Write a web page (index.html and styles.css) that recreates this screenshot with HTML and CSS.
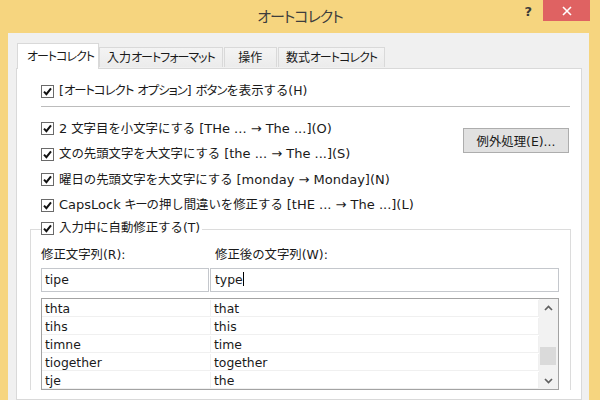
FILE: index.html
```html
<!DOCTYPE html>
<html lang="ja">
<head>
<meta charset="utf-8">
<title>オートコレクト</title>
<link rel="stylesheet" href="styles.css">
</head>
<body>
<div class="window">
  <div class="titlebar">
    <div class="tb-left"></div>
    <div class="title"><span class="kt">オートコレクト</span></div>
    <div class="tb-right">
      <span class="help">?</span>
      <span class="close"><svg width="10" height="10" viewBox="0 0 10 10"><path d="M1 1L9 9M9 1L1 9" stroke="#fff" stroke-width="1.6" fill="none"/></svg></span>
    </div>
  </div>
  <div class="client">
    <div class="tabs">
      <div class="tab active"><span class="kt">オートコレクト</span></div>
      <div class="tab">入力<span class="kt">オートフォーマット</span></div>
      <div class="tab tab-narrow">操作</div>
      <div class="tab">数式<span class="kt">オートコレクト</span></div>
    </div>
    <div class="page">
      <label class="check top-row"><span class="box"><svg width="13" height="13" viewBox="0 0 13 13"><path d="M3 6.6L5.4 9.2L10 3.4" stroke="#111" stroke-width="2" fill="none"/></svg></span><span>[<span class="kt">オートコレクト</span> <span class="kt">オプション</span>] <span class="kt">ボタン</span>を表示する(H)</span></label>
      <div class="sep"></div>
      <div class="opts">
        <div class="checks">
          <label class="check row"><span class="box"><svg width="13" height="13" viewBox="0 0 13 13"><path d="M3 6.6L5.4 9.2L10 3.4" stroke="#111" stroke-width="2" fill="none"/></svg></span><span><span class="lt">2</span> 文字目を小文字にする <span class="lt">[THe ... → The ...](O)</span></span></label>
          <label class="check row"><span class="box"><svg width="13" height="13" viewBox="0 0 13 13"><path d="M3 6.6L5.4 9.2L10 3.4" stroke="#111" stroke-width="2" fill="none"/></svg></span><span>文の先頭文字を大文字にする <span class="lt">[the ... → The ...](S)</span></span></label>
          <label class="check row"><span class="box"><svg width="13" height="13" viewBox="0 0 13 13"><path d="M3 6.6L5.4 9.2L10 3.4" stroke="#111" stroke-width="2" fill="none"/></svg></span><span>曜日の先頭文字を大文字にする <span class="lt">[monday → Monday](N)</span></span></label>
          <label class="check row"><span class="box"><svg width="13" height="13" viewBox="0 0 13 13"><path d="M3 6.6L5.4 9.2L10 3.4" stroke="#111" stroke-width="2" fill="none"/></svg></span><span><span class="lt">CapsLock</span> <span class="kt">キー</span>の押し間違いを修正する <span class="lt">[tHE ... → The ...](L)</span></span></label>
        </div>
        <button class="btn">例外処理(E)...</button>
      </div>
      <div class="group">
        <div class="group-head"><label class="check legend"><span class="box"><svg width="13" height="13" viewBox="0 0 13 13"><path d="M3 6.6L5.4 9.2L10 3.4" stroke="#111" stroke-width="2" fill="none"/></svg></span><span>入力中に自動修正する(T)</span></label></div>
        <div class="fields">
          <div class="lbl">修正文字列(R):</div>
          <div class="lbl lbl2">修正後の文字列(W):</div>
          <div class="input">tipe</div>
          <div class="input">type<span class="caret"></span></div>
        </div>
        <div class="list">
          <div class="rows">
            <div class="lrow"><span class="c1">thta</span><span class="c2">that</span></div>
            <div class="lrow"><span class="c1">tihs</span><span class="c2">this</span></div>
            <div class="lrow"><span class="c1">timne</span><span class="c2">time</span></div>
            <div class="lrow"><span class="c1">tiogether</span><span class="c2">together</span></div>
            <div class="lrow"><span class="c1">tje</span><span class="c2">the</span></div>
          </div>
          <div class="scrollbar">
            <span class="arrow"><svg width="9" height="6" viewBox="0 0 9 6"><path d="M1 5L4.5 1.5L8 5" stroke="#606060" stroke-width="1.7" fill="none"/></svg></span>
            <span class="track"><span class="thumb"></span></span>
            <span class="arrow"><svg width="9" height="6" viewBox="0 0 9 6"><path d="M1 1L4.5 4.5L8 1" stroke="#606060" stroke-width="1.7" fill="none"/></svg></span>
          </div>
        </div>
      </div>
    </div>
  </div>
</div>
</body>
</html>
```

FILE: styles.css
```css
* { box-sizing: border-box; }
html, body { margin: 0; padding: 0; }
body {
  width: 600px;
  height: 400px;
  overflow: hidden;
  background: #f6d57f;
  font-family: "DejaVu Sans", "Noto Sans CJK JP", sans-serif;
  font-size: 12.4px;
  color: #1a1a1a;
}
.kt { font-feature-settings: "palt"; letter-spacing: -1px; }
.lt { font-size: 13px; }
.window { width: 600px; height: 400px; display: flex; flex-direction: column; }

.titlebar {
  height: 33px;
  display: grid;
  grid-template-columns: 1fr auto 1fr;
  flex: none;
}
.title {
  font-family: "Noto Sans CJK JP", sans-serif;
  font-size: 15px;
  line-height: 20px;
  padding-top: 6px;
  color: #3d3d3d;
}
.tb-right { display: flex; justify-content: flex-end; align-items: flex-start; }
.help {
  font-family: "DejaVu Sans", sans-serif;
  font-weight: bold;
  font-size: 13px;
  line-height: 16px;
  color: #3a3a3a;
  margin-top: 4px;
  margin-right: 11px;
}
.close {
  width: 47px;
  height: 21px;
  background: #df6262;
  margin-right: 10px;
  display: flex;
  align-items: center;
  justify-content: center;
}

.client {
  flex: 1;
  margin: 0 11px 0 8px;
  background: #f0f0f0;
  padding: 10px 7px 0 8px;
  display: flex;
  flex-direction: column;
}
.tabs {
  display: flex;
  align-items: flex-end;
  padding-left: 1px;
  margin-bottom: -1px;
  position: relative;
  z-index: 1;
  flex: none;
  font-size: 12px;
}
.tab {
  height: 20px;
  padding: 2px 7px 0 7px;
  line-height: 16px;
  border: 1px solid #d9d9d9;
  border-bottom: none;
  background: linear-gradient(#f4f4f4, #ebebeb);
  margin-bottom: 2px;
  margin-left: 1px;
  white-space: nowrap;
}
.tab.active {
  height: 26px;
  padding: 5px 4px 0 9px;
  background: #fff;
  margin-bottom: 0;
  margin-left: 0;
}
.tab.active + .tab { margin-left: 0; }
.tab-narrow { min-width: 53px; text-align: center; }

.page {
  flex: 1;
  background: #fff;
  border: 1px solid #d9d9d9;
  padding: 14px 0 0 24px;
}

.check { display: flex; align-items: center; gap: 5px; white-space: nowrap; line-height: 16px; }
.box {
  width: 13px;
  height: 13px;
  border: 1px solid #6a6a6a;
  background: #fff;
  display: block;
  flex: none;
}
.box svg { display: block; margin: -1px; }
.top-row { height: 16px; }
.sep { height: 1px; background: #bcbcbc; margin: 7px 11px 0 0; }

.opts {
  margin-top: 9px;
  display: grid;
  grid-template-columns: 1fr auto;
  margin-right: 12px;
}
.row { height: 25.5px; }
.btn {
  margin-top: 12px;
  width: 106px;
  height: 25px;
  background: #e1e1e1;
  border: 1px solid #adadad;
  font: inherit;
  color: #1a1a1a;
  padding: 0;
}

.group {
  margin: 11px 10px 0 -11px;
  border: 1px solid #dcdcdc;
  border-bottom: none;
  flex: 1;
  padding: 0 0 0 10px;
}
.group-head { display: flex; margin-top: -11px; height: 18px; }
.legend { background: #fff; padding-right: 2px; }

.fields {
  margin-top: 10px;
  display: grid;
  grid-template-columns: 168px 349px;
  column-gap: 1px;
  row-gap: 5px;
}
.lbl { line-height: 16px; }
.lbl2 { padding-left: 5px; }
.input {
  height: 24px;
  border: 1px solid #c4c7cc;
  padding: 0 3px;
  line-height: 22px;
}
.input + .input { padding-left: 4px; }
.caret { display: inline-block; width: 1px; height: 14px; background: #000; vertical-align: -2px; }

.list {
  margin-top: 6px;
  width: 518px;
  height: 92px;
  border: 1px solid #a3a3a3;
  display: flex;
}
.rows { flex: 1; }
.lrow { display: flex; height: 18px; border-bottom: 1px solid #f0f0f0; line-height: 17px; padding-top: 1px; }
.c1 { width: 169px; border-right: 1px solid #f0f0f0; padding-left: 3px; }
.c2 { flex: 1; padding-left: 3px; border-right: 1px solid #f0f0f0; }

.scrollbar {
  width: 19px;
  background: #f2f2f2;
  display: flex;
  flex-direction: column;
}
.arrow { height: 17px; display: flex; align-items: center; justify-content: center; }
.track { flex: 1; padding-top: 31px; }
.thumb { display: block; height: 18px; margin: 0 2px 0 1px; background: #dadada; }
```
